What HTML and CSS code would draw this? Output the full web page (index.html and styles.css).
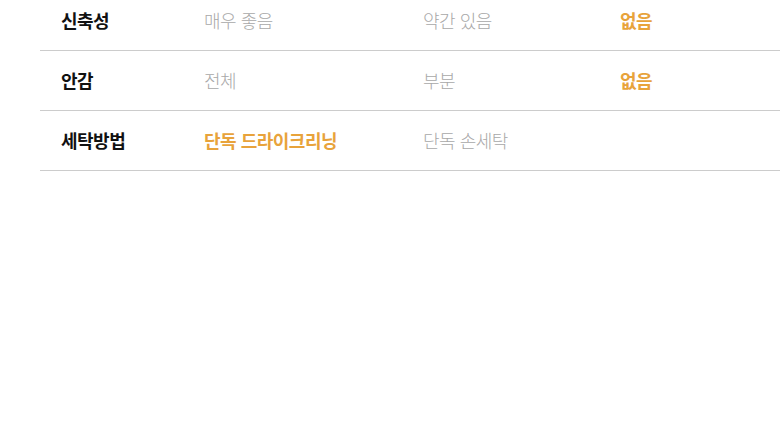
FILE: index.html
```html
<!DOCTYPE html>
<html lang="ko">
<head>
<meta charset="utf-8">
<link rel="stylesheet" href="styles.css">
</head>
<body>
<div class="table">
  <div class="row">
    <div class="cell label">신축성</div>
    <div class="cell muted">매우 좋음</div>
    <div class="cell muted">약간 있음</div>
    <div class="cell active">없음</div>
  </div>
  <div class="row">
    <div class="cell label">안감</div>
    <div class="cell muted">전체</div>
    <div class="cell muted">부분</div>
    <div class="cell active">없음</div>
  </div>
  <div class="row">
    <div class="cell label">세탁방법</div>
    <div class="cell active">단독 드라이크리닝</div>
    <div class="cell muted">단독 손세탁</div>
    <div class="cell"></div>
  </div>
</div>
</body>
</html>
```
FILE: styles.css
```css
html, body {
  margin: 0;
  padding: 0;
  background: #fff;
  overflow: hidden;
}
body {
  font-family: "Noto Sans CJK KR", "Noto Sans", sans-serif;
  font-size: 18px;
  letter-spacing: -0.5px;
}
.table {
  margin-top: -9px;
  margin-left: 40px;
  width: 760px;
}
.row {
  display: grid;
  grid-template-columns: 164px 219px 197px 1fr;
  height: 59px;
  border-bottom: 1px solid #cccccc;
  align-items: center;
}
.cell {
  line-height: 20px;
  padding-bottom: 2px;
}
.label {
  padding-left: 21px;
  font-weight: 700;
  color: #111;
}
.muted {
  color: #a8a8a8;
  font-weight: 300;
}
.active {
  color: #e8a33b;
  font-weight: 700;
}
```
